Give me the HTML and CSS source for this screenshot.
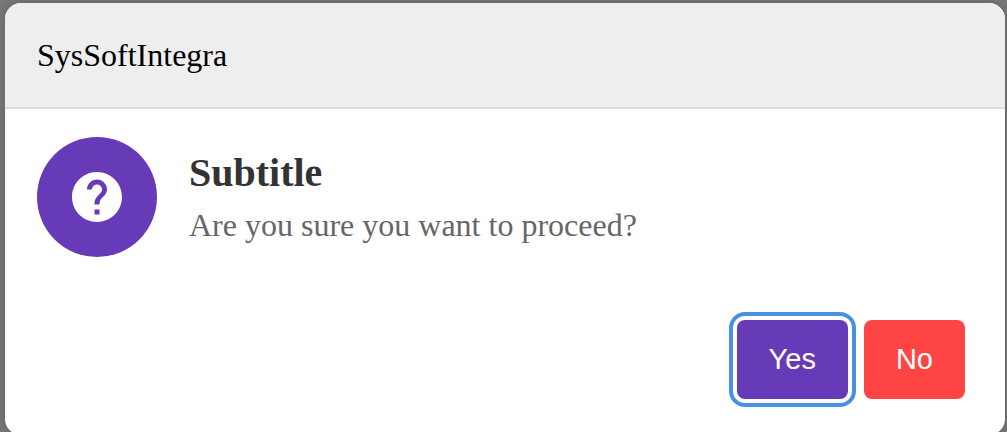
FILE: index.html
```html
<!DOCTYPE html>
<html lang="en">
<head>
<meta charset="utf-8">
<meta name="viewport" content="width=device-width, initial-scale=1">
<title>SysSoftIntegra</title>
<link rel="stylesheet" href="styles.css">
</head>
<body>
<section class="dialog" role="dialog" aria-labelledby="dialog-title" aria-describedby="dialog-text">
  <header class="dialog-header" id="dialog-title">SysSoftIntegra</header>
  <div class="dialog-body">
    <div class="dialog-icon">
      <svg viewBox="0 0 24 24" fill="currentColor" aria-hidden="true"><path d="M12 2C6.48 2 2 6.48 2 12s4.48 10 10 10 10-4.48 10-10S17.52 2 12 2zm1 17h-2v-2h2v2zm2.07-7.75l-.9.92C13.45 12.9 13 13.5 13 15h-2v-.5c0-1.1.45-2.1 1.17-2.83l1.24-1.26c.37-.36.59-.86.59-1.41 0-1.1-.9-2-2-2s-2 .9-2 2H8c0-2.21 1.79-4 4-4s4 1.79 4 4c0 .88-.36 1.68-.93 2.25z"/></svg>
    </div>
    <div class="dialog-message">
      <h2 class="dialog-subtitle">Subtitle</h2>
      <p class="dialog-text" id="dialog-text">Are you sure you want to proceed?</p>
    </div>
  </div>
  <footer class="dialog-footer">
    <button class="button button-yes" type="button">Yes</button>
    <button class="button button-no" type="button">No</button>
  </footer>
</section>
</body>
</html>
```
FILE: styles.css
```css
* {
  box-sizing: border-box;
}

html {
  overflow: hidden;
}

body {
  margin: 0;
  padding: 3px 2px 0 5px;
  background: #777;
  font-family: "Liberation Serif", "Times New Roman", serif;
}

.dialog {
  overflow: hidden;
  border-radius: 16px;
  background: #fff;
  box-shadow: 0 0 8px rgba(0, 0, 0, 0.2);
}

.dialog-header {
  padding: 32px;
  border-bottom: 2px solid #ddd;
  background: #eee;
  color: #000;
  font-size: 32px;
  line-height: 40px;
}

.dialog-body {
  display: flex;
  align-items: center;
  gap: 32px;
  padding: 28px 32px;
}

.dialog-icon {
  display: flex;
  flex: none;
  align-items: center;
  justify-content: center;
  width: 120px;
  height: 120px;
  border-radius: 50%;
  background: #673ab7;
  color: #fff;
}

.dialog-icon svg {
  width: 60px;
  height: 60px;
}

.dialog-subtitle {
  margin: 0 0 8px;
  color: #333;
  font-size: 40px;
  line-height: 48px;
}

.dialog-text {
  margin: 0;
  color: #666;
  font-size: 32px;
  line-height: 40px;
}

.dialog-footer {
  display: flex;
  justify-content: flex-end;
  gap: 16px;
  padding: 35px 40px 36px;
}

.button {
  padding: 24px 32px;
  border: 0;
  border-radius: 8px;
  color: #fff;
  font-family: "Liberation Sans", Arial, sans-serif;
  font-size: 29px;
  line-height: 31px;
}

.button-yes {
  background: #673ab7;
  box-shadow: 0 0 0 4px #fff, 0 0 0 8px #4a90e2;
}

.button-no {
  background: #ff4444;
}
```
